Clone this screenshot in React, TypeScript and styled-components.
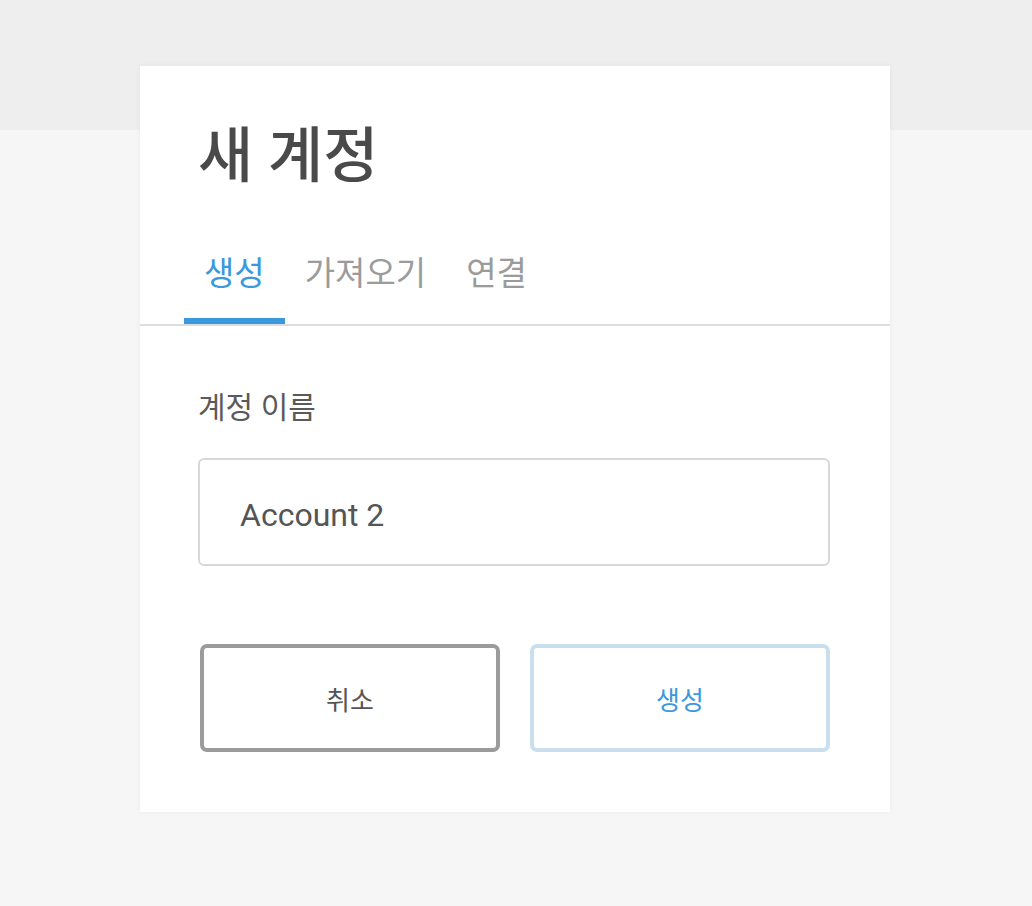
import { useState } from 'react';
import styled, { createGlobalStyle } from 'styled-components';

const GlobalStyle = createGlobalStyle`
  html, body {
    margin: 0;
    padding: 0;
  }
  body {
    font-family: Roboto, "Noto Sans CJK KR", sans-serif;
    background: linear-gradient(to bottom, #eeeeee 0, #eeeeee 130px, #f6f6f6 130px, #f6f6f6 100%);
    min-height: 906px;
  }
`;

const Page = styled.div`
  display: flex;
  justify-content: center;
  padding: 66px 2px 0 0;
`;

const Card = styled.div`
  width: 750px;
  background: #fff;
  box-shadow: 0 0 6px rgba(0, 0, 0, 0.05);
`;

const Header = styled.header`
  padding: 51px 0 0;
  border-bottom: 2px solid #dddddd;
`;

const Title = styled.h1`
  margin: 0 0 0 58px;
  font-size: 60px;
  line-height: 80px;
  font-weight: 500;
  color: #4a4a4a;
`;

const Tabs = styled.nav`
  display: flex;
  margin: 52px 0 0 44px;
`;

const Tab = styled.button<{ $active?: boolean }>`
  appearance: none;
  background: none;
  border: none;
  font-family: inherit;
  font-size: 33px;
  line-height: 44px;
  padding: 3px 20px 22px;
  cursor: pointer;
  color: ${(p) => (p.$active ? '#3a99dc' : '#9b9b9b')};
  border-bottom: 6px solid ${(p) => (p.$active ? '#3a99dc' : 'transparent')};
`;

const Body = styled.div`
  padding: 62px 60px 60px 58px;
`;

const Label = styled.label`
  display: block;
  font-size: 30px;
  line-height: 40px;
  color: #5a5a5a;
  margin-bottom: 30px;
`;

const Input = styled.input`
  box-sizing: border-box;
  width: 100%;
  height: 108px;
  border: 2px solid #d6d9dc;
  border-radius: 6px;
  padding: 6px 40px 0;
  font-family: inherit;
  font-size: 32px;
  color: #555;
  outline: none;
`;

const Actions = styled.div`
  display: flex;
  gap: 30px;
  margin-top: 78px;
  padding-left: 2px;
`;

const Button = styled.button<{ $primary?: boolean }>`
  flex: 1;
  height: 108px;
  background: #fff;
  border-radius: 7px;
  font-family: inherit;
  font-size: 26px;
  cursor: pointer;
  border: 4px solid ${(p) => (p.$primary ? '#c9dfee' : '#9b9b9b')};
  color: ${(p) => (p.$primary ? '#3a99dc' : '#555')};
`;

const tabs = ['생성', '가져오기', '연결'];

export default function App() {
  const [active, setActive] = useState(0);
  const [name, setName] = useState('Account 2');
  return (
    <>
      <GlobalStyle />
      <Page>
        <Card>
          <Header>
            <Title>새 계정</Title>
            <Tabs>
              {tabs.map((t, i) => (
                <Tab key={t} $active={i === active} onClick={() => setActive(i)}>
                  {t}
                </Tab>
              ))}
            </Tabs>
          </Header>
          <Body>
            <Label htmlFor="account-name">계정 이름</Label>
            <Input id="account-name" value={name} onChange={(e) => setName(e.target.value)} />
            <Actions>
              <Button>취소</Button>
              <Button $primary>생성</Button>
            </Actions>
          </Body>
        </Card>
      </Page>
    </>
  );
}
